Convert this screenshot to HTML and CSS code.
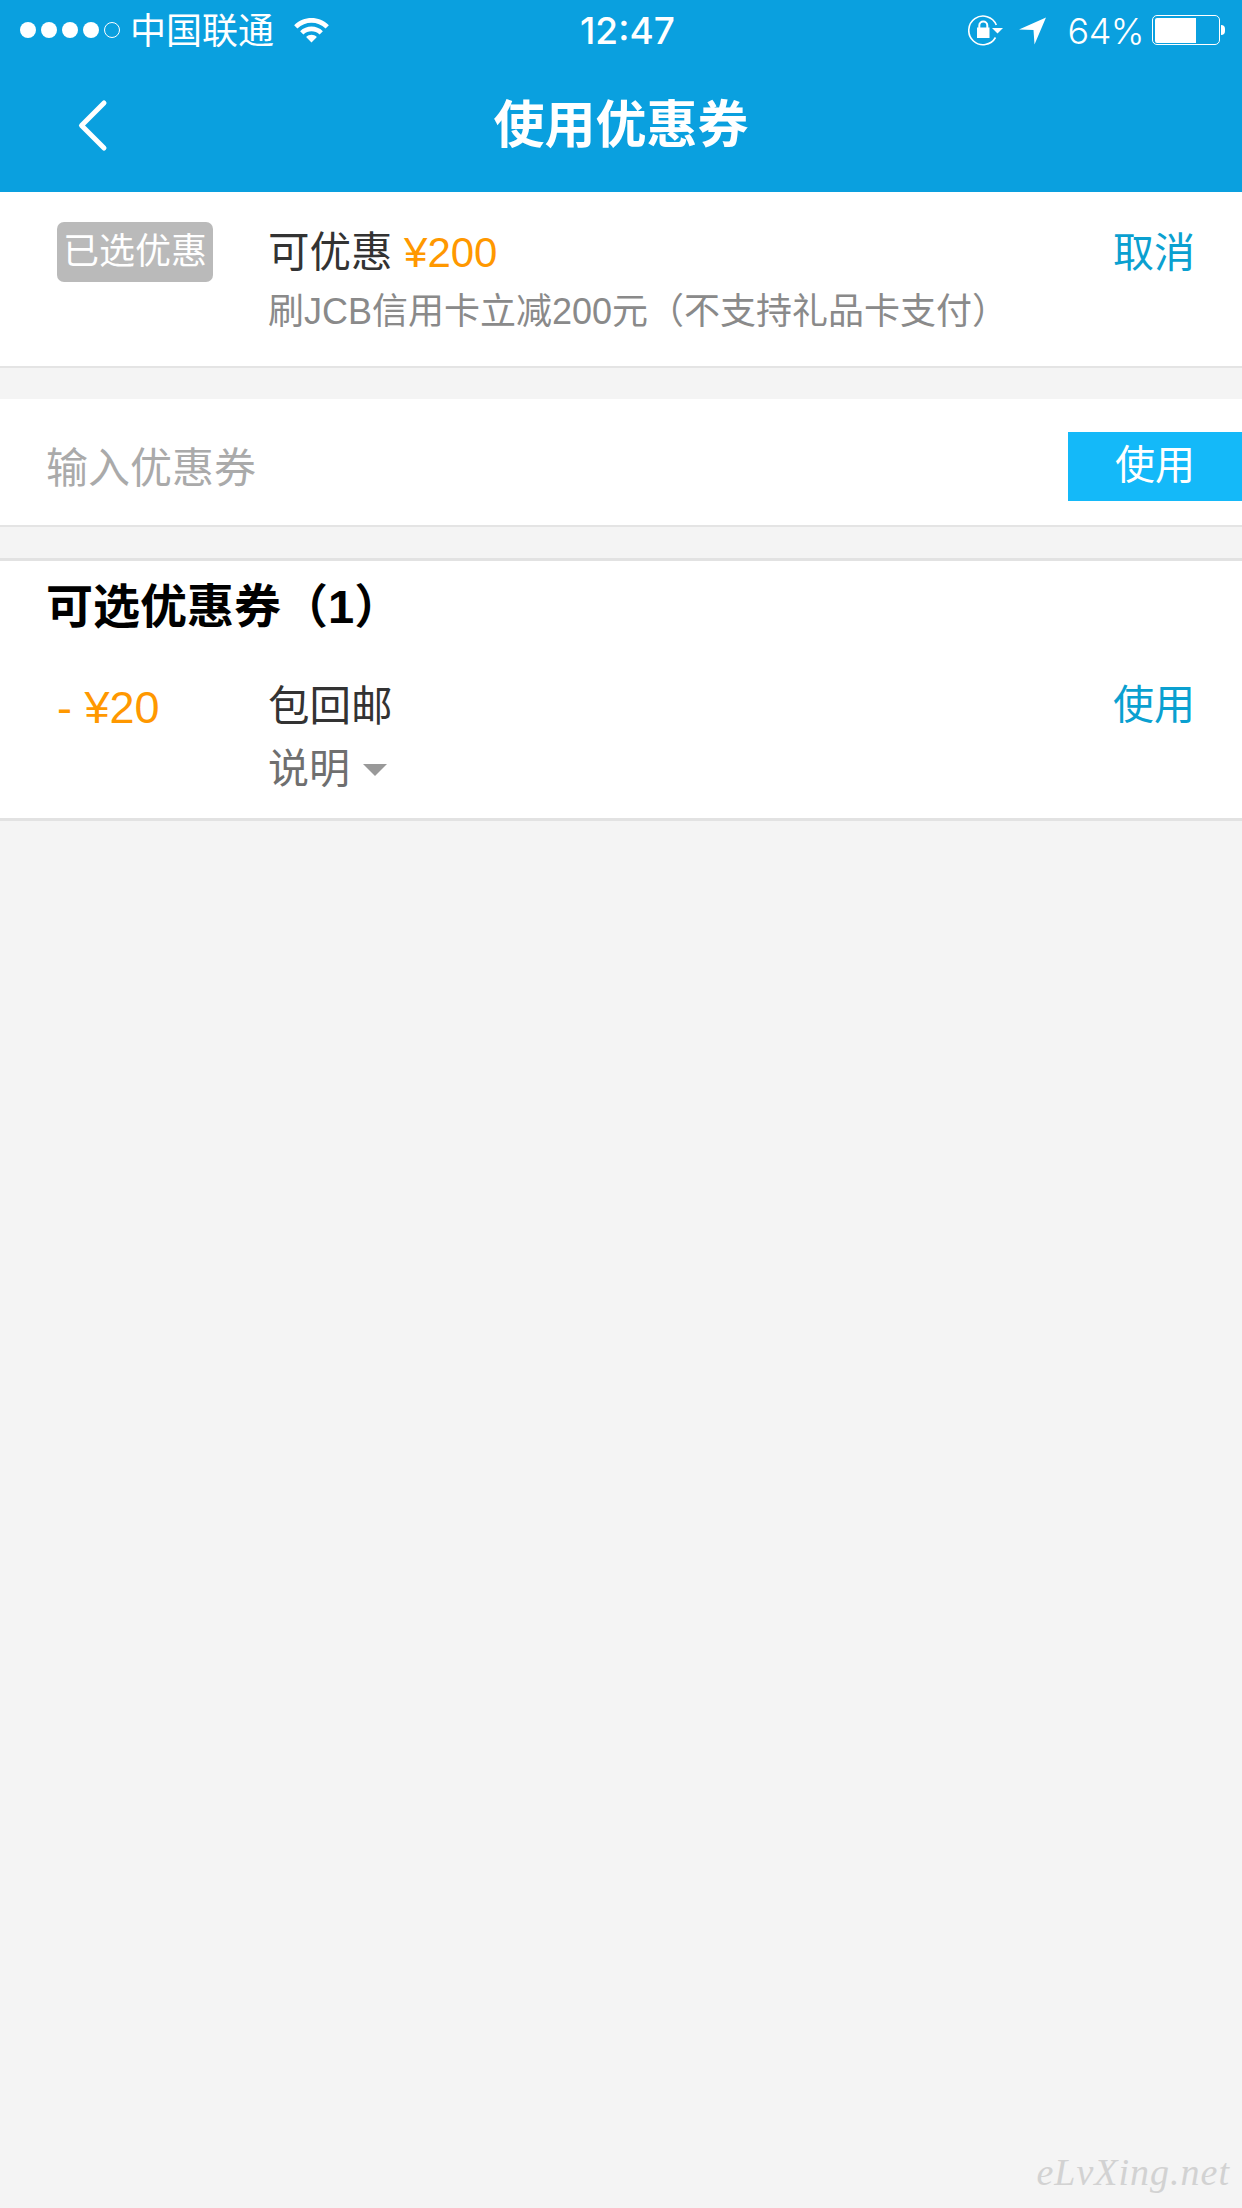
FILE: index.html
```html
<!DOCTYPE html>
<html lang="zh-CN">
<head>
<meta charset="utf-8">
<title>使用优惠券</title>
<link rel="stylesheet" href="styles.css">
</head>
<body>
<div class="screen">
  <header class="topbar">
    <div class="status">
      <div class="status-left">
        <div class="signal">
          <i class="dot"></i><i class="dot"></i><i class="dot"></i><i class="dot"></i><i class="dot empty"></i>
        </div>
        <span class="carrier">中国联通</span>
        <svg class="wifi" width="37" height="27" viewBox="0 0 38 28">
          <path d="M1 9.5C11 -0.5 27 -0.5 37 9.5L33.6 13C25.5 5 12.5 5 4.4 13Z" fill="#fff"/>
          <path d="M7.2 15.7C13.8 9.3 24.2 9.3 30.8 15.7L27.4 19.2C22.7 14.7 15.3 14.7 10.600 19.2Z" fill="#fff"/>
          <path d="M13.4 21.8C16.6 18.8 21.4 18.8 24.6 21.8L19 27.5Z" fill="#fff"/>
        </svg>
      </div>
      <span class="time">12:47</span>
      <div class="status-right">
        <svg class="lock" width="36" height="32" viewBox="0 0 36 32">
          <path d="M28.300 11A14.300 14.300 0 1 0 27.500 23.500" fill="none" stroke="#fff" stroke-width="1.600"/>
          <path d="M24 14H35L29.500 19.500Z" fill="#fff"/>
          <rect x="9" y="13.500" width="12.500" height="10.500" fill="#fff"/>
          <path d="M11.300 14V11.500A4 4 0 0 1 19.300 11.500V14" fill="none" stroke="#fff" stroke-width="2"/>
        </svg>
        <svg class="arrow" width="28" height="28" viewBox="0 0 28 28">
          <path d="M0 12.500L27 0.500L15.500 27.500L14.500 13Z" fill="#fff"/>
        </svg>
        <span class="percent">64%</span>
        <div class="battery"><div class="battery-body"><div class="battery-fill"></div></div><i class="battery-nub"></i></div>
      </div>
    </div>
    <div class="navbar">
      <svg class="back" width="36" height="56" viewBox="0 0 36 56">
        <path d="M29 5L6.500 27.500L29 50" fill="none" stroke="#fff" stroke-width="5" stroke-linecap="round" stroke-linejoin="round"/>
      </svg>
      <h1 class="title">使用优惠券</h1>
    </div>
  </header>

  <section class="card selected">
    <div class="col-left"><span class="tag">已选优惠</span></div>
    <div class="col-main">
      <div class="main-line">可优惠 <span class="price">¥200</span></div>
      <div class="sub-line">刷JCB信用卡立减200元（不支持礼品卡支付）</div>
    </div>
    <a class="action">取消</a>
  </section>

  <section class="card entry">
    <span class="placeholder">输入优惠券</span>
    <span class="use-btn">使用</span>
  </section>

  <section class="card list">
    <h2 class="list-title">可选优惠券（1）</h2>
    <div class="coupon">
      <div class="col-left"><span class="amount">- ¥20</span></div>
      <div class="col-main">
        <div class="main-line">包回邮</div>
        <div class="note">说明<i class="caret"></i></div>
      </div>
      <a class="action action-tight">使用</a>
    </div>
  </section>

  <div class="watermark">eLvXing.net</div>
</div>
</body>
</html>
```
FILE: styles.css
```css
* { box-sizing: border-box; }
html, body { margin: 0; padding: 0; }
body {
  font-family: "Liberation Sans", "Noto Sans CJK SC", sans-serif;
  background: #f4f4f4;
  color: #333;
}
.screen {
  width: 1242px;
  height: 2208px;
  position: relative;
  overflow: hidden;
  background: #f4f4f4;
}
.topbar {
  height: 192px;
  background: #0aa0df;
  color: #fff;
}
.status {
  height: 60px;
  display: flex;
  align-items: center;
  padding: 0 17px 0 20px;
}
.status-left {
  width: 560px;
  display: flex;
  align-items: center;
}
.signal { display: flex; gap: 5px; margin-right: 10px; }
.dot { width: 16px; height: 16px; border-radius: 50%; background: #fff; display: block; }
.dot.empty { background: none; border: 1px solid #fff; }
.carrier { font-size: 36px; line-height: 44px; position: relative; top: 2px; }
.wifi { margin-left: 19px; margin-top: -2px; }
.time { font-family: Inter, "Liberation Sans", sans-serif; font-size: 37px; font-weight: 500; line-height: 44px; position: relative; top: 1px; }
.status-right { margin-left: auto; display: flex; align-items: center; }
.lock { margin-right: 15px; margin-top: -1px; }
.arrow { margin-right: 20px; margin-top: 2px; }
.percent { font-family: Inter, "Liberation Sans", sans-serif; font-size: 36px; font-weight: 300; line-height: 44px; margin-right: 8px; position: relative; top: 1px; letter-spacing: -0.5px; }
.battery { display: flex; align-items: center; }
.battery-body {
  width: 68px; height: 30px;
  border: 1.500px solid #fff; border-radius: 5px;
  padding: 1.500px;
}
.battery-fill { width: 41px; height: 100%; background: #fff; border-radius: 2px 0 0 2px; }
.battery-nub { width: 4px; height: 10px; background: #fff; border-radius: 0 5px 5px 0; margin-left: 1px; display: block; }
.navbar {
  height: 132px;
  display: flex;
  align-items: center;
  justify-content: center;
  position: relative;
}
.back { position: absolute; left: 75px; top: 38px; }
.title { margin: 0; font-size: 51px; font-weight: 700; line-height: 64px; }

.card { background: #fff; }
.selected {
  height: 176px;
  border-bottom: 2px solid #e4e4e4;
  display: flex;
  align-items: flex-start;
  padding: 30px 47px 0 0;
}
.col-left { width: 268px; padding-left: 57px; flex: none; }
.col-main { flex: 1; }
.tag {
  display: block;
  width: 156px; height: 60px;
  background: #bababa;
  color: #fff;
  border-radius: 7px;
  font-size: 36px;
  line-height: 59px;
  text-align: center;
  white-space: nowrap;
}
.main-line { font-size: 41.500px; line-height: 62px; color: #333; }
.price { color: #ff9800; font-size: 42px; }
.sub-line { font-size: 36px; line-height: 50px; color: #8a8a8a; white-space: nowrap; margin-top: 3px; }
.action { font-size: 41px; line-height: 62px; color: #0aa0d0; }
.action-tight { margin-top: -2px; }
.entry {
  margin-top: 31px;
  height: 128px;
  border-bottom: 2px solid #e4e4e4;
  display: flex;
  align-items: center;
  justify-content: space-between;
  padding: 18px 0 4px 46px;
}
.placeholder { font-size: 42px; color: #aaa; line-height: 60px; }
.use-btn {
  width: 174px; height: 69px;
  background: #14b9f9;
  color: #fff;
  font-size: 40px;
  line-height: 66px;
  text-align: center;
  margin-top: -5px;
}
.list {
  margin-top: 31px;
  height: 263px;
  border-top: 3px solid #e2e2e2;
  border-bottom: 3px solid #e2e2e2;
  padding: 16px 47px 0 0;
}
.list-title {
  margin: 0;
  padding-left: 46px;
  font-size: 47px;
  line-height: 60px;
  font-weight: 700;
  color: #000;
}
.coupon { display: flex; align-items: flex-start; margin-top: 39px; }
.amount { font-size: 45px; line-height: 64px; color: #ff9800; }
.note { font-size: 41px; line-height: 60px; margin-top: 1px; color: #6f6f6f; display: flex; align-items: center; }
.caret {
  width: 0; height: 0;
  margin-left: 13px; margin-top: 2px;
  border-left: 12px solid transparent;
  border-right: 12px solid transparent;
  border-top: 12px solid #999;
}
.watermark {
  position: absolute;
  right: 12px;
  bottom: 14px;
  font-family: "Liberation Serif", serif;
  font-style: italic;
  font-size: 38px;
  letter-spacing: 1px;
  color: #d2d2d2;
}
```
